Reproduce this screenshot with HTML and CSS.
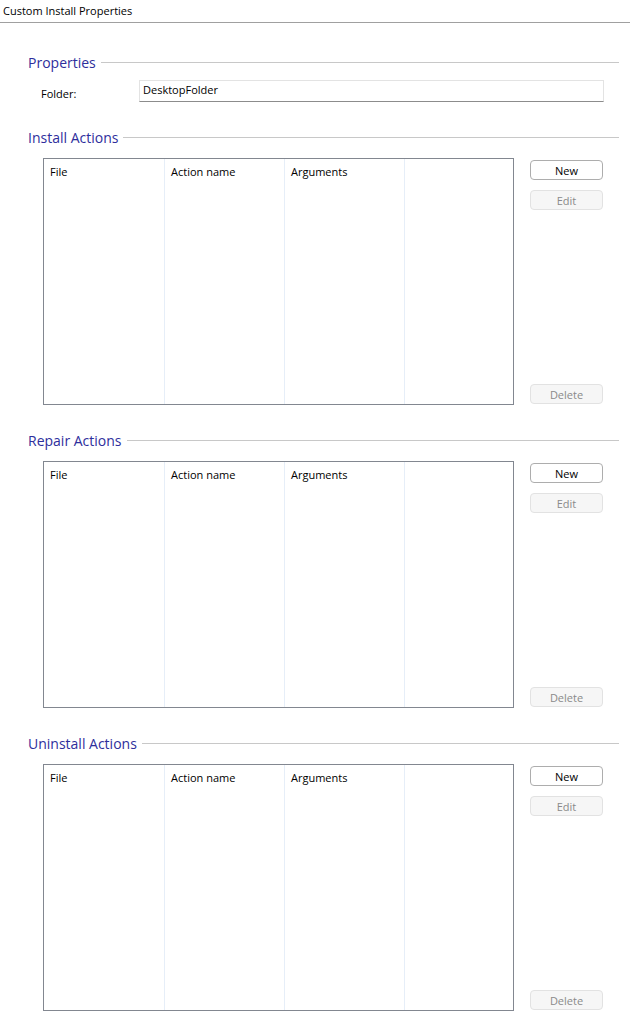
FILE: index.html
```html
<!DOCTYPE html>
<html lang="en">
<head>
    <meta charset="UTF-8">
    <title>Custom Install Properties</title>
    <link rel="stylesheet" href="styles.css">
</head>
<body>
    <div class="title-bar">Custom Install Properties</div>

    <div class="content">
        <div class="group-header">
            <span class="group-title">Properties</span>
            <span class="group-line"></span>
        </div>
        <div class="field-row">
            <label class="field-label">Folder:</label>
            <div class="field-input">DesktopFolder</div>
        </div>

        <div class="group-header">
            <span class="group-title">Install Actions</span>
            <span class="group-line"></span>
        </div>
        <div class="action-row">
            <div class="list-view">
                <div class="list-col">File</div>
                <div class="list-col">Action name</div>
                <div class="list-col">Arguments</div>
                <div class="list-col"></div>
            </div>
            <div class="button-col">
                <button class="btn">New</button>
                <button class="btn disabled">Edit</button>
                <button class="btn disabled delete">Delete</button>
            </div>
        </div>

        <div class="group-header">
            <span class="group-title">Repair Actions</span>
            <span class="group-line"></span>
        </div>
        <div class="action-row">
            <div class="list-view">
                <div class="list-col">File</div>
                <div class="list-col">Action name</div>
                <div class="list-col">Arguments</div>
                <div class="list-col"></div>
            </div>
            <div class="button-col">
                <button class="btn">New</button>
                <button class="btn disabled">Edit</button>
                <button class="btn disabled delete">Delete</button>
            </div>
        </div>

        <div class="group-header">
            <span class="group-title">Uninstall Actions</span>
            <span class="group-line"></span>
        </div>
        <div class="action-row">
            <div class="list-view">
                <div class="list-col">File</div>
                <div class="list-col">Action name</div>
                <div class="list-col">Arguments</div>
                <div class="list-col"></div>
            </div>
            <div class="button-col">
                <button class="btn">New</button>
                <button class="btn disabled">Edit</button>
                <button class="btn disabled delete">Delete</button>
            </div>
        </div>
    </div>
</body>
</html>
```

FILE: styles.css
```css
* {
    margin: 0;
    padding: 0;
    box-sizing: border-box;
}

body {
    background-color: #ffffff;
    font-family: "Open Sans", "Noto Sans", sans-serif;
    font-size: 11px;
    color: #000;
}

.title-bar {
    height: 23px;
    line-height: 22px;
    padding-left: 3px;
    border-bottom: 1px solid #a0a0a0;
}

.content {
    padding: 29px 11px 0 28px;
}

.group-header {
    display: flex;
    align-items: center;
    height: 20px;
    margin-bottom: 8px;
}

.group-title {
    font-size: 14px;
    color: #2e2e9c;
    padding-right: 5px;
}

.group-line {
    flex: 1;
    border-top: 1px solid #c8c8c8;
}

.field-row {
    display: flex;
    align-items: center;
    height: 22px;
    margin-bottom: 25px;
    padding-right: 15px;
}

.field-label {
    width: 111px;
    padding-left: 13px;
    padding-top: 4px;
}

.field-input {
    flex: 1;
    height: 22px;
    line-height: 18px;
    padding-left: 3px;
    border: 1px solid #e3e3e3;
    border-bottom-color: #8c8c8c;
}

.action-row {
    display: flex;
    margin-top: 11px;
    margin-bottom: 25px;
    padding-left: 15px;
}

.list-view {
    width: 471px;
    height: 247px;
    border: 1px solid #828790;
    display: grid;
    grid-template-columns: 121px 120px 120px 1fr;
}

.list-col {
    border-right: 1px solid #e6eef8;
    padding: 5px 0 0 6px;
}

.list-col:last-child {
    border-right: none;
}

.button-col {
    display: flex;
    flex-direction: column;
    gap: 10px;
    margin-left: 16px;
    padding: 2px 0 1px 0;
}

.btn {
    width: 73px;
    height: 20px;
    font-family: inherit;
    font-size: 11px;
    background-color: #ffffff;
    color: #000;
    border: 1px solid #adadad;
    border-radius: 4px;
}

.btn.disabled {
    background-color: #f6f6f6;
    border-color: #e2e2e2;
    color: #8a8a8a;
}

.btn.delete {
    margin-top: auto;
}
```
